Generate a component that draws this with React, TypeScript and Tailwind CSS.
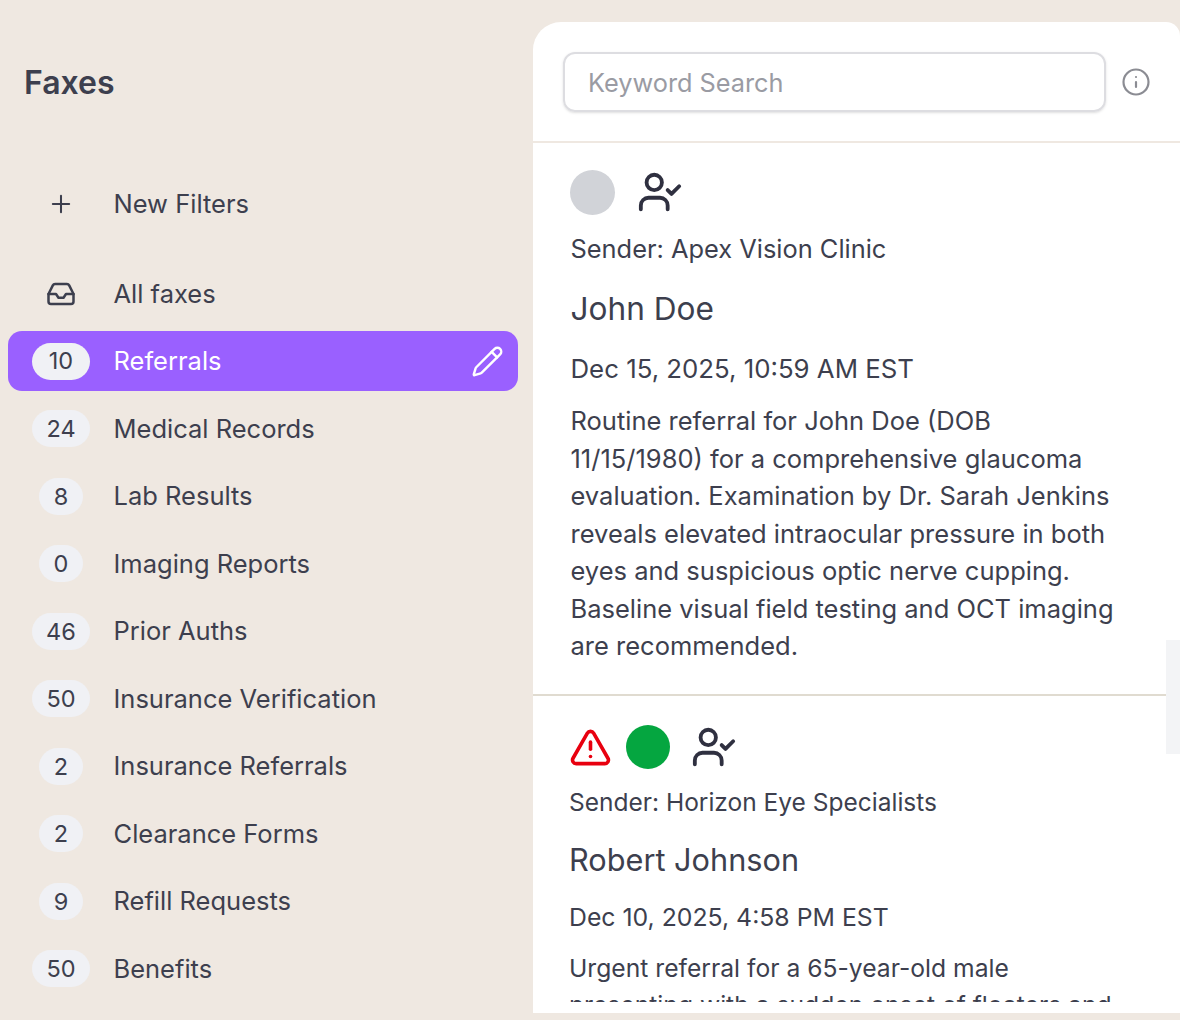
import { Plus, Inbox, Pencil, Info, UserCheck, TriangleAlert } from "lucide-react"

const filters = [
  { count: 24, label: "Medical Records" },
  { count: 8, label: "Lab Results" },
  { count: 0, label: "Imaging Reports" },
  { count: 46, label: "Prior Auths" },
  { count: 50, label: "Insurance Verification" },
  { count: 2, label: "Insurance Referrals" },
  { count: 2, label: "Clearance Forms" },
  { count: 9, label: "Refill Requests" },
  { count: 50, label: "Benefits" },
]

function Badge({ count }: { count: number }) {
  return (
    <div className="flex w-[58px] shrink-0 justify-center">
      <span
        className={`flex h-[37px] items-center justify-center rounded-full bg-[#f0f1f5] text-[23.5px] text-[#3d3f4e] ${
          count >= 10 ? "w-[58px]" : "w-[44px]"
        }`}
      >
        {count}
      </span>
    </div>
  )
}

export default function App() {
  return (
    <div className="flex h-[1020px] w-[1180px] overflow-hidden bg-[#efe8e1] font-['Inter',sans-serif] text-[#3d3f4e]">
      {/* Sidebar */}
      <aside className="w-[533px] shrink-0">
        <h1 className="ml-[24px] mt-[63px] text-[32px] leading-[40px] font-semibold">Faxes</h1>

        <div className="mt-[81px] flex h-[40px] items-center pl-[32px] text-[25.5px]">
          <div className="flex w-[58px] justify-center">
            <Plus size={28} strokeWidth={1.75} />
          </div>
          <span className="ml-[23.5px]">New Filters</span>
        </div>

        <div className="mt-[50px] flex h-[40px] items-center pl-[32px] text-[25.5px]">
          <div className="flex w-[58px] justify-center">
            <Inbox size={30} strokeWidth={2} />
          </div>
          <span className="ml-[23.5px]">All faxes</span>
        </div>

        <div className="ml-[8px] mt-[17px] flex h-[60px] w-[510px] items-center rounded-[14px] bg-[#9a60ff] pl-[24px] pr-[14px] text-[25.5px] text-white">
          <Badge count={10} />
          <span className="ml-[23.5px]">Referrals</span>
          <Pencil size={33} strokeWidth={1.75} className="ml-auto" />
        </div>

        <ul className="mt-[4px] flex flex-col">
          {filters.map((f) => (
            <li key={f.label} className="flex h-[67.5px] items-center pl-[32px] text-[25.5px]">
              <Badge count={f.count} />
              <span className="ml-[23.5px]">{f.label}</span>
            </li>
          ))}
        </ul>
      </aside>

      {/* Fax list */}
      <main className="relative mt-[22px] h-[991px] flex-1 overflow-hidden rounded-tl-[28px] rounded-tr-[14px] bg-white">
        <div className="flex h-[121px] items-center border-b-2 border-[#efe8e1] pl-[30px] pr-[29px]">
          <div className="flex h-[60px] flex-1 items-center rounded-[12px] border-2 border-[#dddde1] pl-[23px] pt-[3px] text-[25.3px] text-[#9a9ba3] shadow-sm">
            Keyword Search
          </div>
          <Info size={30} strokeWidth={1.75} className="ml-[15px] text-[#8b8c93]" />
        </div>

        <section className="h-[553px] border-b-2 border-[#e0dbd0] pl-[37.5px] pr-[60px]">
          <div className="-ml-[0.5px] h-[87px] pt-[26px]">
            <div className="flex h-[46px] items-center">
              <span className="h-[45px] w-[45px] rounded-full bg-[#d1d3d8]" />
              <UserCheck size={46} strokeWidth={2} className="ml-[22px] text-[#2f3040]" />
            </div>
          </div>
          <p className="text-[25.4px] leading-[38px]">Sender: Apex Vision Clinic</p>
          <h2 className="mt-[21px] text-[31.6px] leading-[40px]">John Doe</h2>
          <p className="mt-[21px] text-[25.8px] leading-[38px]">Dec 15, 2025, 10:59 AM EST</p>
          <p className="mt-[14px] text-[25.5px] leading-[37.5px]">
            Routine referral for John Doe (DOB 11/15/1980) for a comprehensive glaucoma evaluation. Examination by Dr. Sarah Jenkins reveals elevated intraocular pressure in both eyes and suspicious optic nerve cupping. Baseline visual field testing and OCT imaging are recommended.
          </p>
        </section>

        <section className="pl-[36px] pr-[50px]">
          <div className="h-[88px] pt-[28px]">
            <div className="flex h-[46px] items-center">
              <TriangleAlert size={43} strokeWidth={2} className="text-[#e8000f]" />
              <span className="ml-[14px] h-[44px] w-[44px] rounded-full bg-[#05a640]" />
              <UserCheck size={46} strokeWidth={2} className="ml-[21px] text-[#2f3040]" />
            </div>
          </div>
          <p className="text-[24.5px] leading-[36px]">Sender: Horizon Eye Specialists</p>
          <h2 className="mt-[20px] text-[30.7px] leading-[40px]">Robert Johnson</h2>
          <p className="mt-[19px] text-[24.8px] leading-[36px]">Dec 10, 2025, 4:58 PM EST</p>
          <div className="mt-[15px] h-[52px] overflow-hidden">
            <p className="text-[24.66px] leading-[37px]">
              Urgent referral for a 65-year-old male presenting with a sudden onset of floaters and
            </p>
          </div>
        </section>

        {/* scrollbar sliver */}
        <div className="absolute right-0 top-[618px] h-[114px] w-[14px] bg-[#f3f4f6]" />
      </main>
    </div>
  )
}
